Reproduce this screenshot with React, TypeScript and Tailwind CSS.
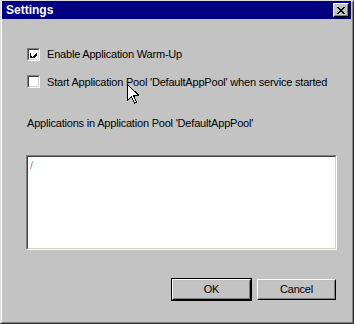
import type { ReactNode } from 'react';

function CheckBox({ checked }: { checked?: boolean }) {
  return (
    <span className="block h-[13px] w-[13px] shrink-0 border border-t-[#808080] border-l-[#808080] border-r-white border-b-white">
      <span className="flex h-full w-full items-center justify-center border border-t-[#404040] border-l-[#404040] border-r-[#d4d0c8] border-b-[#d4d0c8] bg-white">
        {checked && (
          <svg width="7" height="7" viewBox="0 0 7 7" shapeRendering="crispEdges">
            <path d="M0 2h1v3h1v1h1v-1h1v-1h1v-1h1v-1h1v3h-1v1h-1v1h-1v1h-1v1h-1v-1h-1v-1h-1z" fill="#000" />
          </svg>
        )}
      </span>
    </span>
  );
}

function Button({ children, primary }: { children: ReactNode; primary?: boolean }) {
  return (
    <button
      type="button"
      className={
        'h-[23px] w-[81px] ' + (primary ? 'border border-black' : 'border border-transparent')
      }
    >
      <span className="flex h-full w-full border border-t-white border-l-white border-r-black border-b-black">
        <span className="flex h-full w-full items-center justify-center border border-t-[#c0c0c0] border-l-[#c0c0c0] border-r-[#808080] border-b-[#808080] text-[11px] tracking-[-0.2px] text-black">
          {children}
        </span>
      </span>
    </button>
  );
}

export default function App() {
  return (
    <div
      className="relative h-[324px] w-[354px] overflow-hidden bg-[#c3c3c3] text-[11px] tracking-[-0.2px] text-black"
      style={{ fontFamily: '"Liberation Sans", Arial, sans-serif' }}
    >
      <div className="flex h-full w-full flex-col border-l border-t border-r border-b border-l-[#dcdcdc] border-t-[#dcdcdc] border-r-[#303030] border-b-[#303030]">
        <div className="flex h-full w-full flex-col border border-l-white border-t-white border-r-[#808080] border-b-[#808080] pr-[1px]">
          {/* title bar */}
          <div className="mt-[-1px] flex h-[18px] items-center justify-between bg-[#000080] pl-[4px] pr-[2px]">
            <span className="text-[12px] font-bold tracking-normal text-white">Settings</span>
            <span className="flex h-[14px] w-[16px] border border-t-white border-l-white border-r-black border-b-black bg-[#c3c3c3]">
              <span className="flex h-full w-full items-center justify-center border border-transparent border-r-[#808080] border-b-[#808080]">
                <svg width="8" height="7" viewBox="0 0 8 7" shapeRendering="crispEdges">
                  <path
                    d="M0 0h2v1h1v1h2v-1h1v-1h2v1h-1v1h-1v1h-1v1h1v1h1v1h1v1h-2v-1h-1v-1h-2v1h-1v1h-2v-1h1v-1h1v-1h1v-1h-1v-1h-1v-1h-1z"
                    fill="#000"
                  />
                </svg>
              </span>
            </span>
          </div>

          {/* body */}
          <div className="flex flex-1 flex-col whitespace-nowrap pl-[25px] pr-[14px]">
            <label className="mt-[27px] flex items-center gap-[7px]">
              <CheckBox checked />
              <span>Enable Application Warm-Up</span>
            </label>
            <label className="mt-[11px] flex items-center gap-[7px]">
              <CheckBox />
              <span>Start Application Pool 'DefaultAppPool' when service started</span>
            </label>
            <div className="mt-[25px]">Applications in Application Pool 'DefaultAppPool'</div>

            <div className="ml-[-1px] mt-[23px] h-[95px] border border-t-[#808080] border-l-[#808080] border-r-white border-b-white">
              <div className="h-full w-full border border-t-[#404040] border-l-[#404040] border-r-[#d4d0c8] border-b-[#d4d0c8] bg-white px-[2px] text-[#8a8aa8]">
                /
              </div>
            </div>

            <div className="mt-[28px] flex justify-end gap-[4px]">
              <Button primary>OK</Button>
              <Button>Cancel</Button>
            </div>
          </div>
        </div>
      </div>

      {/* mouse pointer */}
      <svg className="absolute left-[127px] top-[84px]" width="12" height="20" viewBox="0 0 12 20" shapeRendering="crispEdges">
        <path
          d="M0.5 0.5v16l4-4 3 6.5 2-1-3-6.5h5.5z"
          fill="#fff"
          stroke="#000"
          strokeWidth="1"
        />
      </svg>
    </div>
  );
}
